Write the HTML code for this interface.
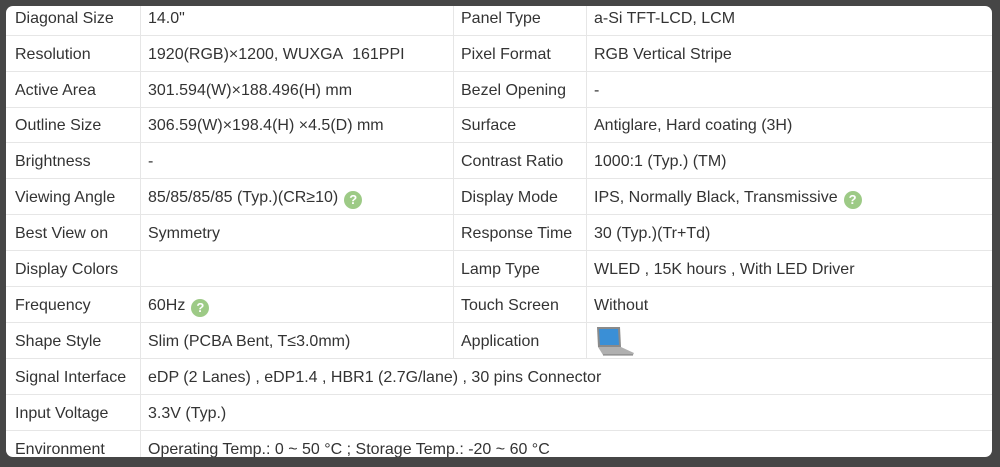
<!DOCTYPE html>
<html><head><style>
body{margin:0;width:1000px;height:465px;overflow:hidden;background:#fff;position:relative;font-family:"Liberation Sans",Arial,sans-serif;font-size:16px;color:#333}
.r{position:absolute;left:0;width:1000px;height:36px;border-bottom:1px solid #e6e6e6;box-sizing:border-box}
.c{position:absolute;top:1px;height:35px;line-height:35px;white-space:nowrap}
.v{position:absolute;top:0;width:1px;height:465px;background:#e6e6e6}
.q{display:inline-block;width:18px;height:18px;border-radius:50%;background:#9dca86;color:#fff;font-weight:bold;font-size:13px;line-height:18px;text-align:center;vertical-align:-2px;margin-left:6px}
.frame{position:absolute;left:6px;top:6px;width:986px;height:451px;border-radius:7px;box-shadow:0 0 0 60px #464646}
</style></head><body>
<div class="v" style="left:140px"></div>
<div class="v" style="left:453px;height:359px"></div>
<div class="v" style="left:586px;height:359px"></div>
<div class="r" style="top:0"><span class="c" style="left:15px">Diagonal Size</span><span class="c" style="left:148px">14.0"</span><span class="c" style="left:461px">Panel Type</span><span class="c" style="left:594px">a-Si TFT-LCD, LCM</span></div>
<div class="r" style="top:36px"><span class="c" style="left:15px">Resolution</span><span class="c" style="left:148px">1920(RGB)×1200, WUXGA&nbsp; 161PPI</span><span class="c" style="left:461px">Pixel Format</span><span class="c" style="left:594px">RGB Vertical Stripe</span></div>
<div class="r" style="top:72px"><span class="c" style="left:15px">Active Area</span><span class="c" style="left:148px">301.594(W)×188.496(H) mm</span><span class="c" style="left:461px">Bezel Opening</span><span class="c" style="left:594px">-</span></div>
<div class="r" style="top:107px"><span class="c" style="left:15px">Outline Size</span><span class="c" style="left:148px">306.59(W)×198.4(H) ×4.5(D) mm</span><span class="c" style="left:461px">Surface</span><span class="c" style="left:594px">Antiglare, Hard coating (3H)</span></div>
<div class="r" style="top:143px"><span class="c" style="left:15px">Brightness</span><span class="c" style="left:148px">-</span><span class="c" style="left:461px">Contrast Ratio</span><span class="c" style="left:594px">1000:1 (Typ.) (TM)</span></div>
<div class="r" style="top:179px"><span class="c" style="left:15px">Viewing Angle</span><span class="c" style="left:148px">85/85/85/85 (Typ.)(CR≥10)<span class="q">?</span></span><span class="c" style="left:461px">Display Mode</span><span class="c" style="left:594px">IPS, Normally Black, Transmissive<span class="q">?</span></span></div>
<div class="r" style="top:215px"><span class="c" style="left:15px">Best View on</span><span class="c" style="left:148px">Symmetry</span><span class="c" style="left:461px">Response Time</span><span class="c" style="left:594px">30 (Typ.)(Tr+Td)</span></div>
<div class="r" style="top:251px"><span class="c" style="left:15px">Display Colors</span><span class="c" style="left:461px">Lamp Type</span><span class="c" style="left:594px">WLED , 15K hours , With LED Driver</span></div>
<div class="r" style="top:287px"><span class="c" style="left:15px">Frequency</span><span class="c" style="left:148px">60Hz<span class="q">?</span></span><span class="c" style="left:461px">Touch Screen</span><span class="c" style="left:594px">Without</span></div>
<div class="r" style="top:323px"><span class="c" style="left:15px">Shape Style</span><span class="c" style="left:148px">Slim (PCBA Bent, T≤3.0mm)</span><span class="c" style="left:461px">Application</span>
<svg style="position:absolute;left:595px;top:2px" width="42" height="32" viewBox="0 0 42 32"><path d="M2 2h23l1 20H3z" fill="#8a8a8a"/><path d="M4 4h19l1 16H5z" fill="#3a8fd6"/><path d="M3 22h23l13 6-1 2H8z" fill="#b0b0b0"/><path d="M8 30h30" stroke="#777"/></svg></div>
<div class="r" style="top:359px"><span class="c" style="left:15px">Signal Interface</span><span class="c" style="left:148px">eDP (2 Lanes) , eDP1.4 , HBR1 (2.7G/lane) , 30 pins Connector</span></div>
<div class="r" style="top:395px"><span class="c" style="left:15px">Input Voltage</span><span class="c" style="left:148px">3.3V (Typ.)</span></div>
<div class="r" style="top:431px"><span class="c" style="left:15px">Environment</span><span class="c" style="left:148px">Operating Temp.: 0 ~ 50 °C ; Storage Temp.: -20 ~ 60 °C</span></div>
<div class="frame"></div>
</body></html>
